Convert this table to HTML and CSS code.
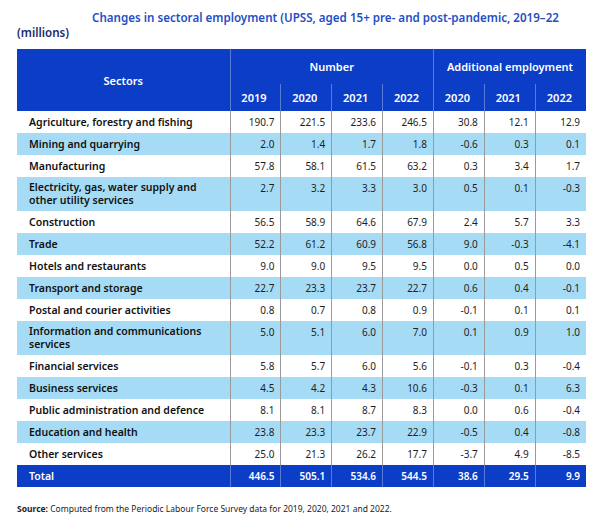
FILE: index.html
```html
<!DOCTYPE html>
<html>
<head>
<meta charset="utf-8">
<link rel="stylesheet" href="styles.css">
</head>
<body>
<div class="page">
  <h1 class="title">Changes in sectoral employment (UPSS, aged 15+ pre- and post-pandemic, 2019–22 <span class="unit">(millions)</span></h1>
  <table class="data">
    <colgroup>
      <col class="c-sector">
      <col class="c-num"><col class="c-num"><col class="c-num"><col class="c-num">
      <col class="c-num"><col class="c-num"><col class="c-num">
    </colgroup>
    <thead>
      <tr class="h1">
        <th rowspan="2" class="sect">Sectors</th>
        <th colspan="4" class="grp">Number</th>
        <th colspan="3" class="grp">Additional employment</th>
      </tr>
      <tr class="h2">
        <th>2019</th><th>2020</th><th>2021</th><th>2022</th>
        <th>2020</th><th>2021</th><th>2022</th>
      </tr>
    </thead>
    <tbody>
      <tr><td class="lab">Agriculture, forestry and fishing</td><td>190.7</td><td>221.5</td><td>233.6</td><td>246.5</td><td>30.8</td><td>12.1</td><td>12.9</td></tr>
      <tr class="alt"><td class="lab">Mining and quarrying</td><td>2.0</td><td>1.4</td><td>1.7</td><td>1.8</td><td>-0.6</td><td>0.3</td><td>0.1</td></tr>
      <tr><td class="lab">Manufacturing</td><td>57.8</td><td>58.1</td><td>61.5</td><td>63.2</td><td>0.3</td><td>3.4</td><td>1.7</td></tr>
      <tr class="alt"><td class="lab two">Electricity, gas, water supply and<br>other utility services</td><td>2.7</td><td>3.2</td><td>3.3</td><td>3.0</td><td>0.5</td><td>0.1</td><td>-0.3</td></tr>
      <tr><td class="lab">Construction</td><td>56.5</td><td>58.9</td><td>64.6</td><td>67.9</td><td>2.4</td><td>5.7</td><td>3.3</td></tr>
      <tr class="alt"><td class="lab">Trade</td><td>52.2</td><td>61.2</td><td>60.9</td><td>56.8</td><td>9.0</td><td>-0.3</td><td>-4.1</td></tr>
      <tr><td class="lab">Hotels and restaurants</td><td>9.0</td><td>9.0</td><td>9.5</td><td>9.5</td><td>0.0</td><td>0.5</td><td>0.0</td></tr>
      <tr class="alt"><td class="lab">Transport and storage</td><td>22.7</td><td>23.3</td><td>23.7</td><td>22.7</td><td>0.6</td><td>0.4</td><td>-0.1</td></tr>
      <tr><td class="lab">Postal and courier activities</td><td>0.8</td><td>0.7</td><td>0.8</td><td>0.9</td><td>-0.1</td><td>0.1</td><td>0.1</td></tr>
      <tr class="alt"><td class="lab two">Information and communications<br>services</td><td>5.0</td><td>5.1</td><td>6.0</td><td>7.0</td><td>0.1</td><td>0.9</td><td>1.0</td></tr>
      <tr><td class="lab">Financial services</td><td>5.8</td><td>5.7</td><td>6.0</td><td>5.6</td><td>-0.1</td><td>0.3</td><td>-0.4</td></tr>
      <tr class="alt"><td class="lab">Business services</td><td>4.5</td><td>4.2</td><td>4.3</td><td>10.6</td><td>-0.3</td><td>0.1</td><td>6.3</td></tr>
      <tr><td class="lab">Public administration and defence</td><td>8.1</td><td>8.1</td><td>8.7</td><td>8.3</td><td>0.0</td><td>0.6</td><td>-0.4</td></tr>
      <tr class="alt"><td class="lab">Education and health</td><td>23.8</td><td>23.3</td><td>23.7</td><td>22.9</td><td>-0.5</td><td>0.4</td><td>-0.8</td></tr>
      <tr><td class="lab">Other services</td><td>25.0</td><td>21.3</td><td>26.2</td><td>17.7</td><td>-3.7</td><td>4.9</td><td>-8.5</td></tr>
    </tbody>
    <tfoot>
      <tr class="total"><td class="lab">Total</td><td>446.5</td><td>505.1</td><td>534.6</td><td>544.5</td><td>38.6</td><td>29.5</td><td>9.9</td></tr>
    </tfoot>
  </table>
  <p class="source"><b>Source:</b> Computed from the Periodic Labour Force Survey data for 2019, 2020, 2021 and 2022.</p>
</div>
</body>
</html>
```

FILE: styles.css
```css
html, body {
  margin: 0;
  padding: 0;
  background: #ffffff;
}

.page {
  padding: 10px 16px 0 17px;
  font-family: "Noto Sans", "Open Sans", sans-serif;
  color: #1a1a1a;
}

.title {
  margin: 0 0 9px 0;
  font-size: 11.6px;
  line-height: 15px;
  font-weight: 600;
  color: #1f4fc4;
  text-indent: 75px;
}

.title .unit {
  color: #1d2a6b;
}

.data {
  width: 569px;
  border-collapse: collapse;
  table-layout: fixed;
  font-size: 10px;
}

.c-sector { width: 213px; }
.c-num { width: 50.86px; }

.data th {
  background: #0b3dc6;
  color: #ffffff;
  font-weight: 600;
  font-size: 11px;
  padding: 0;
}

.data .h1 th { height: 35px; }
.data .h2 th { height: 27px; padding-right: 3px; border-left: 1px solid #5a7ad8; }
.data .h1 th.grp { border-left: 1px solid #5a7ad8; vertical-align: middle; }
.data th.sect { text-align: center; }

.data td {
  padding: 5px 6px 5px 6px;
  line-height: 12px;
  text-align: right;
  vertical-align: top;
  border-left: 1px solid #9a9a9a;
  color: #1e1e1e;
}

.data td.lab {
  text-align: left;
  padding-left: 12px;
  font-weight: 600;
  font-size: 10.5px;
  line-height: 12px;
  color: #111111;
  border-left: none;
}

.data td.lab.two {
  line-height: 13px;
  padding-top: 4px;
  padding-bottom: 4px;
}

.data tr.alt td { background: #a6dbf6; }

.data tr.total td {
  background: #0b3dc6;
  color: #ffffff;
  font-weight: 600;
  border-left: 1px solid #5a7ad8;
  padding-top: 5px;
  padding-bottom: 5px;
  vertical-align: middle;
}

.data tr.total td.lab { border-left: none; }

.source {
  margin: 16px 0 0 0;
  font-size: 8.5px;
  color: #222222;
}

.source b { font-weight: 700; }
```
